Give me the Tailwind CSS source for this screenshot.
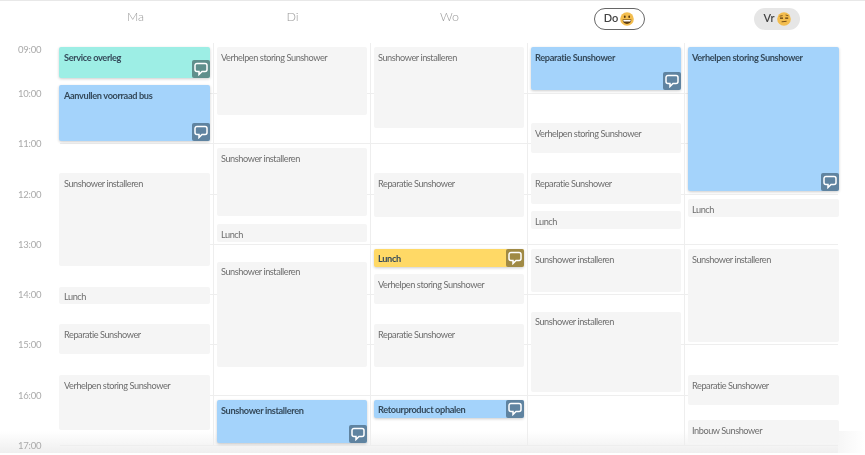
<!doctype html>
<html><head><meta charset="utf-8"><script src="https://cdn.jsdelivr.net/npm/@tailwindcss/browser@4"></script></head>
<body class="bg-white">
<div class="w-[865px] h-[455px] overflow-hidden relative font-['Lato',sans-serif] border-t border-[#e8e8e8] blur-[0.35px]">
  <!-- header -->
  <div class="flex h-[42px] pl-[57px]">
    <div class="w-[157px] h-[33px] flex items-center justify-center text-[12.5px] font-light text-[#999]">Ma</div>
    <div class="w-[157px] h-[33px] flex items-center justify-center text-[12.5px] font-light text-[#999]">Di</div>
    <div class="w-[157px] h-[33px] flex items-center justify-center text-[12.5px] font-light text-[#999]">Wo</div>
    <div class="w-[157px] h-[33px] flex items-center justify-center pl-[25px]">
      <div class="h-[22px] w-[51px] rounded-full border border-[#666] flex items-center justify-center gap-[2px] text-[11px] font-semibold text-[#444] mt-[2px]">Do
        <svg width="14" height="14" viewBox="0 0 14 14"><circle cx="7" cy="7" r="6.8" fill="#f3bd4e"/><ellipse cx="4.8" cy="4.8" rx=".9" ry="1.2" fill="#5a3a10"/><ellipse cx="9.2" cy="4.8" rx=".9" ry="1.2" fill="#5a3a10"/><path d="M2.6 7.6h8.8c0 2.6-2 4.3-4.4 4.3s-4.4-1.7-4.4-4.3z" fill="#5a3a10"/><path d="M3.2 8h7.6l-.4 1.5H3.6z" fill="#fff"/></svg>
      </div>
    </div>
    <div class="w-[157px] h-[33px] flex items-center justify-center pl-[27px]">
      <div class="h-[22px] w-[46px] rounded-full bg-[#e6e6e6] flex items-center justify-center gap-[2px] text-[11px] font-semibold text-[#444] mt-[2px]">Vr
        <svg width="14" height="14" viewBox="0 0 14 14"><circle cx="7" cy="7" r="6.8" fill="#f3bd4e"/><path d="M2.6 4.2l3-.6M8.6 3l2.8.8" stroke="#7a5215" stroke-width=".9" fill="none"/><path d="M3 6.2h3M8.2 6.2h3" stroke="#5a3a10" stroke-width="1.3" fill="none"/><path d="M4.6 9.8l5-.5" stroke="#7a5215" stroke-width="1" fill="none"/></svg>
      </div>
    </div>
  </div>
  <!-- body -->
  <div class="flex relative h-[412px]">
    <!-- bottom fade, under the events -->
    <div class="absolute left-0 w-[838px] top-[388px] h-[22px] bg-gradient-to-b from-white to-[#efefef]"></div>
    <div class="absolute left-[838px] w-[27px] top-[388px] h-[22px] bg-gradient-to-r from-[#f6f6f6] to-white"></div>
    <!-- hour labels -->
    <div class="relative w-[57px] shrink-0 text-[9.5px] tracking-[-0.25px] text-[#aaa] pl-[18px]">
      <div class="h-[44px] leading-[13px]">09:00</div>
      <div class="h-[50.25px] leading-[13px]">10:00</div>
      <div class="h-[50.25px] leading-[13px]">11:00</div>
      <div class="h-[50.25px] leading-[13px]">12:00</div>
      <div class="h-[50.25px] leading-[13px]">13:00</div>
      <div class="h-[50.25px] leading-[13px]">14:00</div>
      <div class="h-[50.25px] leading-[13px]">15:00</div>
      <div class="h-[50.25px] leading-[13px]">16:00</div>
      <div class="h-[20px] leading-[13px]">17:00</div>
    </div>
    <!-- grid lines, behind the events -->
    <div class="absolute left-[60px] top-0 w-[778px] flex flex-col">
      <div class="h-[51px] border-b border-[#eeeeee]"></div>
      <div class="h-[50.25px] border-b border-[#eeeeee]"></div>
      <div class="h-[50.25px] border-b border-[#eeeeee]"></div>
      <div class="h-[50.25px] border-b border-[#eeeeee]"></div>
      <div class="h-[50.25px] border-b border-[#eeeeee]"></div>
      <div class="h-[50.25px] border-b border-[#eeeeee]"></div>
      <div class="h-[50.25px] border-b border-[#eeeeee]"></div>
      <div class="h-[50.25px] border-b border-[#eeeeee]"></div>
    </div>
    <!-- Ma -->
    <div class="relative w-[157px] h-[403px] pl-[2px] pr-[3px] pt-[4px] border-r border-[#eeeeee] flex flex-col text-[9.2px] tracking-[-0.45px] text-[#6e6e6e]">
      <div class="relative h-[31px] rounded-[2px] bg-[#9deee5] shadow-[0_1px_3px_rgba(0,0,0,0.2)] p-[5px] leading-[11px] font-bold tracking-[-0.35px] text-[#34495a]">Service overleg<span class="absolute right-0 bottom-0 size-[18px] rounded-[2px] bg-[#5f8f8c] flex items-center justify-center"><svg width="14" height="14" viewBox="0 0 14 14" fill="none" stroke="#fff" stroke-width="1.5"><path d="M3 1.5h8a2 2 0 0 1 2 2v4a2 2 0 0 1-2 2H8L5 12.5V9.5H3a2 2 0 0 1-2-2v-4a2 2 0 0 1 2-2z"/></svg></span></div>
      <div class="relative h-[56px] mt-[7px] rounded-[2px] bg-[#a4d3fb] shadow-[0_1px_3px_rgba(0,0,0,0.2)] p-[5px] leading-[11px] font-bold tracking-[-0.35px] text-[#34495a]">Aanvullen voorraad bus<span class="absolute right-0 bottom-0 size-[18px] rounded-[2px] bg-[#5f83a0] flex items-center justify-center"><svg width="14" height="14" viewBox="0 0 14 14" fill="none" stroke="#fff" stroke-width="1.5"><path d="M3 1.5h8a2 2 0 0 1 2 2v4a2 2 0 0 1-2 2H8L5 12.5V9.5H3a2 2 0 0 1-2-2v-4a2 2 0 0 1 2-2z"/></svg></span></div>
      <div class="h-[93px] mt-[32px] rounded-[2px] bg-[#f5f5f5] p-[5px] leading-[11px]">Sunshower installeren</div>
      <div class="h-[17px] mt-[21px] rounded-[2px] bg-[#f5f5f5] px-[5px] pt-[2px] leading-[11px] flex items-center">Lunch</div>
      <div class="h-[30px] mt-[20px] rounded-[2px] bg-[#f5f5f5] p-[5px] leading-[11px]">Reparatie Sunshower</div>
      <div class="h-[55px] mt-[21px] rounded-[2px] bg-[#f5f5f5] p-[5px] leading-[11px]">Verhelpen storing Sunshower</div>
    </div>
    <!-- Di -->
    <div class="relative w-[157px] h-[403px] pl-[3px] pr-[3px] pt-[4px] border-r border-[#eeeeee] flex flex-col text-[9.2px] tracking-[-0.45px] text-[#6e6e6e]">
      <div class="h-[68px] rounded-[2px] bg-[#f5f5f5] p-[5px] pl-[4px] leading-[11px]">Verhelpen storing Sunshower</div>
      <div class="h-[68px] mt-[33px] rounded-[2px] bg-[#f5f5f5] p-[5px] pl-[4px] leading-[11px]">Sunshower installeren</div>
      <div class="h-[18px] mt-[8px] rounded-[2px] bg-[#f5f5f5] pl-[4px] pr-[5px] pt-[2px] leading-[11px] flex items-center">Lunch</div>
      <div class="h-[105px] mt-[20px] rounded-[2px] bg-[#f5f5f5] p-[4px] leading-[11px]">Sunshower installeren</div>
      <div class="relative h-[43px] mt-[33px] rounded-[2px] bg-[#a4d3fb] shadow-[0_1px_3px_rgba(0,0,0,0.2)] p-[5px] pl-[4px] leading-[11px] font-bold tracking-[-0.35px] text-[#34495a]">Sunshower installeren<span class="absolute right-0 bottom-0 size-[18px] rounded-[2px] bg-[#5f83a0] flex items-center justify-center"><svg width="14" height="14" viewBox="0 0 14 14" fill="none" stroke="#fff" stroke-width="1.5"><path d="M3 1.5h8a2 2 0 0 1 2 2v4a2 2 0 0 1-2 2H8L5 12.5V9.5H3a2 2 0 0 1-2-2v-4a2 2 0 0 1 2-2z"/></svg></span></div>
    </div>
    <!-- Wo -->
    <div class="relative w-[157px] h-[403px] pl-[3px] pr-[3px] pt-[4px] border-r border-[#eeeeee] flex flex-col text-[9.2px] tracking-[-0.45px] text-[#6e6e6e]">
      <div class="h-[81px] rounded-[2px] bg-[#f5f5f5] p-[5px] pl-[4px] leading-[11px]">Sunshower installeren</div>
      <div class="h-[44px] mt-[45px] rounded-[2px] bg-[#f5f5f5] p-[5px] pl-[4px] leading-[11px]">Reparatie Sunshower</div>
      <div class="relative h-[18px] mt-[32px] rounded-[2px] bg-[#ffd966] shadow-[0_1px_3px_rgba(0,0,0,0.2)] p-[5px] pl-[4px] leading-[11px] font-bold tracking-[-0.35px] text-[#34495a] flex items-center">Lunch<span class="absolute right-0 bottom-0 size-[18px] rounded-[2px] bg-[#a08a45] flex items-center justify-center"><svg width="14" height="14" viewBox="0 0 14 14" fill="none" stroke="#fff" stroke-width="1.5"><path d="M3 1.5h8a2 2 0 0 1 2 2v4a2 2 0 0 1-2 2H8L5 12.5V9.5H3a2 2 0 0 1-2-2v-4a2 2 0 0 1 2-2z"/></svg></span></div>
      <div class="h-[30px] mt-[7px] rounded-[2px] bg-[#f5f5f5] p-[5px] pl-[4px] leading-[11px]">Verhelpen storing Sunshower</div>
      <div class="h-[43px] mt-[20px] rounded-[2px] bg-[#f5f5f5] p-[5px] pl-[4px] leading-[11px]">Reparatie Sunshower</div>
      <div class="relative h-[18px] mt-[33px] rounded-[2px] bg-[#a4d3fb] shadow-[0_1px_3px_rgba(0,0,0,0.2)] p-[5px] pl-[4px] leading-[11px] font-bold tracking-[-0.35px] text-[#34495a] flex items-center">Retourproduct ophalen<span class="absolute right-0 bottom-0 size-[18px] rounded-[2px] bg-[#5f83a0] flex items-center justify-center"><svg width="14" height="14" viewBox="0 0 14 14" fill="none" stroke="#fff" stroke-width="1.5"><path d="M3 1.5h8a2 2 0 0 1 2 2v4a2 2 0 0 1-2 2H8L5 12.5V9.5H3a2 2 0 0 1-2-2v-4a2 2 0 0 1 2-2z"/></svg></span></div>
    </div>
    <!-- Do -->
    <div class="relative w-[157px] h-[403px] pl-[3px] pr-[3px] pt-[4px] border-r border-[#eeeeee] flex flex-col text-[9.2px] tracking-[-0.45px] text-[#6e6e6e]">
      <div class="relative h-[43px] rounded-[2px] bg-[#a4d3fb] shadow-[0_1px_3px_rgba(0,0,0,0.2)] p-[5px] pl-[4px] leading-[11px] font-bold tracking-[-0.35px] text-[#34495a]">Reparatie Sunshower<span class="absolute right-0 bottom-0 size-[18px] rounded-[2px] bg-[#5f83a0] flex items-center justify-center"><svg width="14" height="14" viewBox="0 0 14 14" fill="none" stroke="#fff" stroke-width="1.5"><path d="M3 1.5h8a2 2 0 0 1 2 2v4a2 2 0 0 1-2 2H8L5 12.5V9.5H3a2 2 0 0 1-2-2v-4a2 2 0 0 1 2-2z"/></svg></span></div>
      <div class="h-[30px] mt-[33px] rounded-[2px] bg-[#f5f5f5] p-[5px] pl-[4px] leading-[11px]">Verhelpen storing Sunshower</div>
      <div class="h-[31px] mt-[20px] rounded-[2px] bg-[#f5f5f5] p-[5px] pl-[4px] leading-[11px]">Reparatie Sunshower</div>
      <div class="h-[18px] mt-[7px] rounded-[2px] bg-[#f5f5f5] pl-[4px] pr-[5px] pt-[2px] leading-[11px] flex items-center">Lunch</div>
      <div class="h-[43px] mt-[20px] rounded-[2px] bg-[#f5f5f5] p-[5px] pl-[4px] leading-[11px]">Sunshower installeren</div>
      <div class="h-[80px] mt-[20px] rounded-[2px] bg-[#f5f5f5] p-[4px] leading-[11px]">Sunshower installeren</div>
    </div>
    <!-- Vr -->
    <div class="relative w-[157px] h-[403px] pl-[3px] pr-[3px] pt-[4px] flex flex-col text-[9.2px] tracking-[-0.45px] text-[#6e6e6e]">
      <div class="relative h-[144px] rounded-[2px] bg-[#a4d3fb] shadow-[0_1px_3px_rgba(0,0,0,0.2)] p-[5px] pl-[4px] leading-[11px] font-bold tracking-[-0.35px] text-[#34495a]">Verhelpen storing Sunshower<span class="absolute right-0 bottom-0 size-[18px] rounded-[2px] bg-[#5f83a0] flex items-center justify-center"><svg width="14" height="14" viewBox="0 0 14 14" fill="none" stroke="#fff" stroke-width="1.5"><path d="M3 1.5h8a2 2 0 0 1 2 2v4a2 2 0 0 1-2 2H8L5 12.5V9.5H3a2 2 0 0 1-2-2v-4a2 2 0 0 1 2-2z"/></svg></span></div>
      <div class="h-[18px] mt-[8px] rounded-[2px] bg-[#f5f5f5] pl-[4px] pr-[5px] pt-[2px] leading-[11px] flex items-center">Lunch</div>
      <div class="h-[93px] mt-[32px] rounded-[2px] bg-[#f5f5f5] p-[5px] pl-[4px] leading-[11px]">Sunshower installeren</div>
      <div class="h-[30px] mt-[33px] rounded-[2px] bg-[#f5f5f5] p-[5px] pl-[4px] leading-[11px]">Reparatie Sunshower</div>
      <div class="h-[23px] mt-[15px] rounded-[2px] bg-[#f5f5f5] p-[5px] pl-[4px] leading-[11px]">Inbouw Sunshower</div>
    </div>
  </div>
</div>
</body></html>
